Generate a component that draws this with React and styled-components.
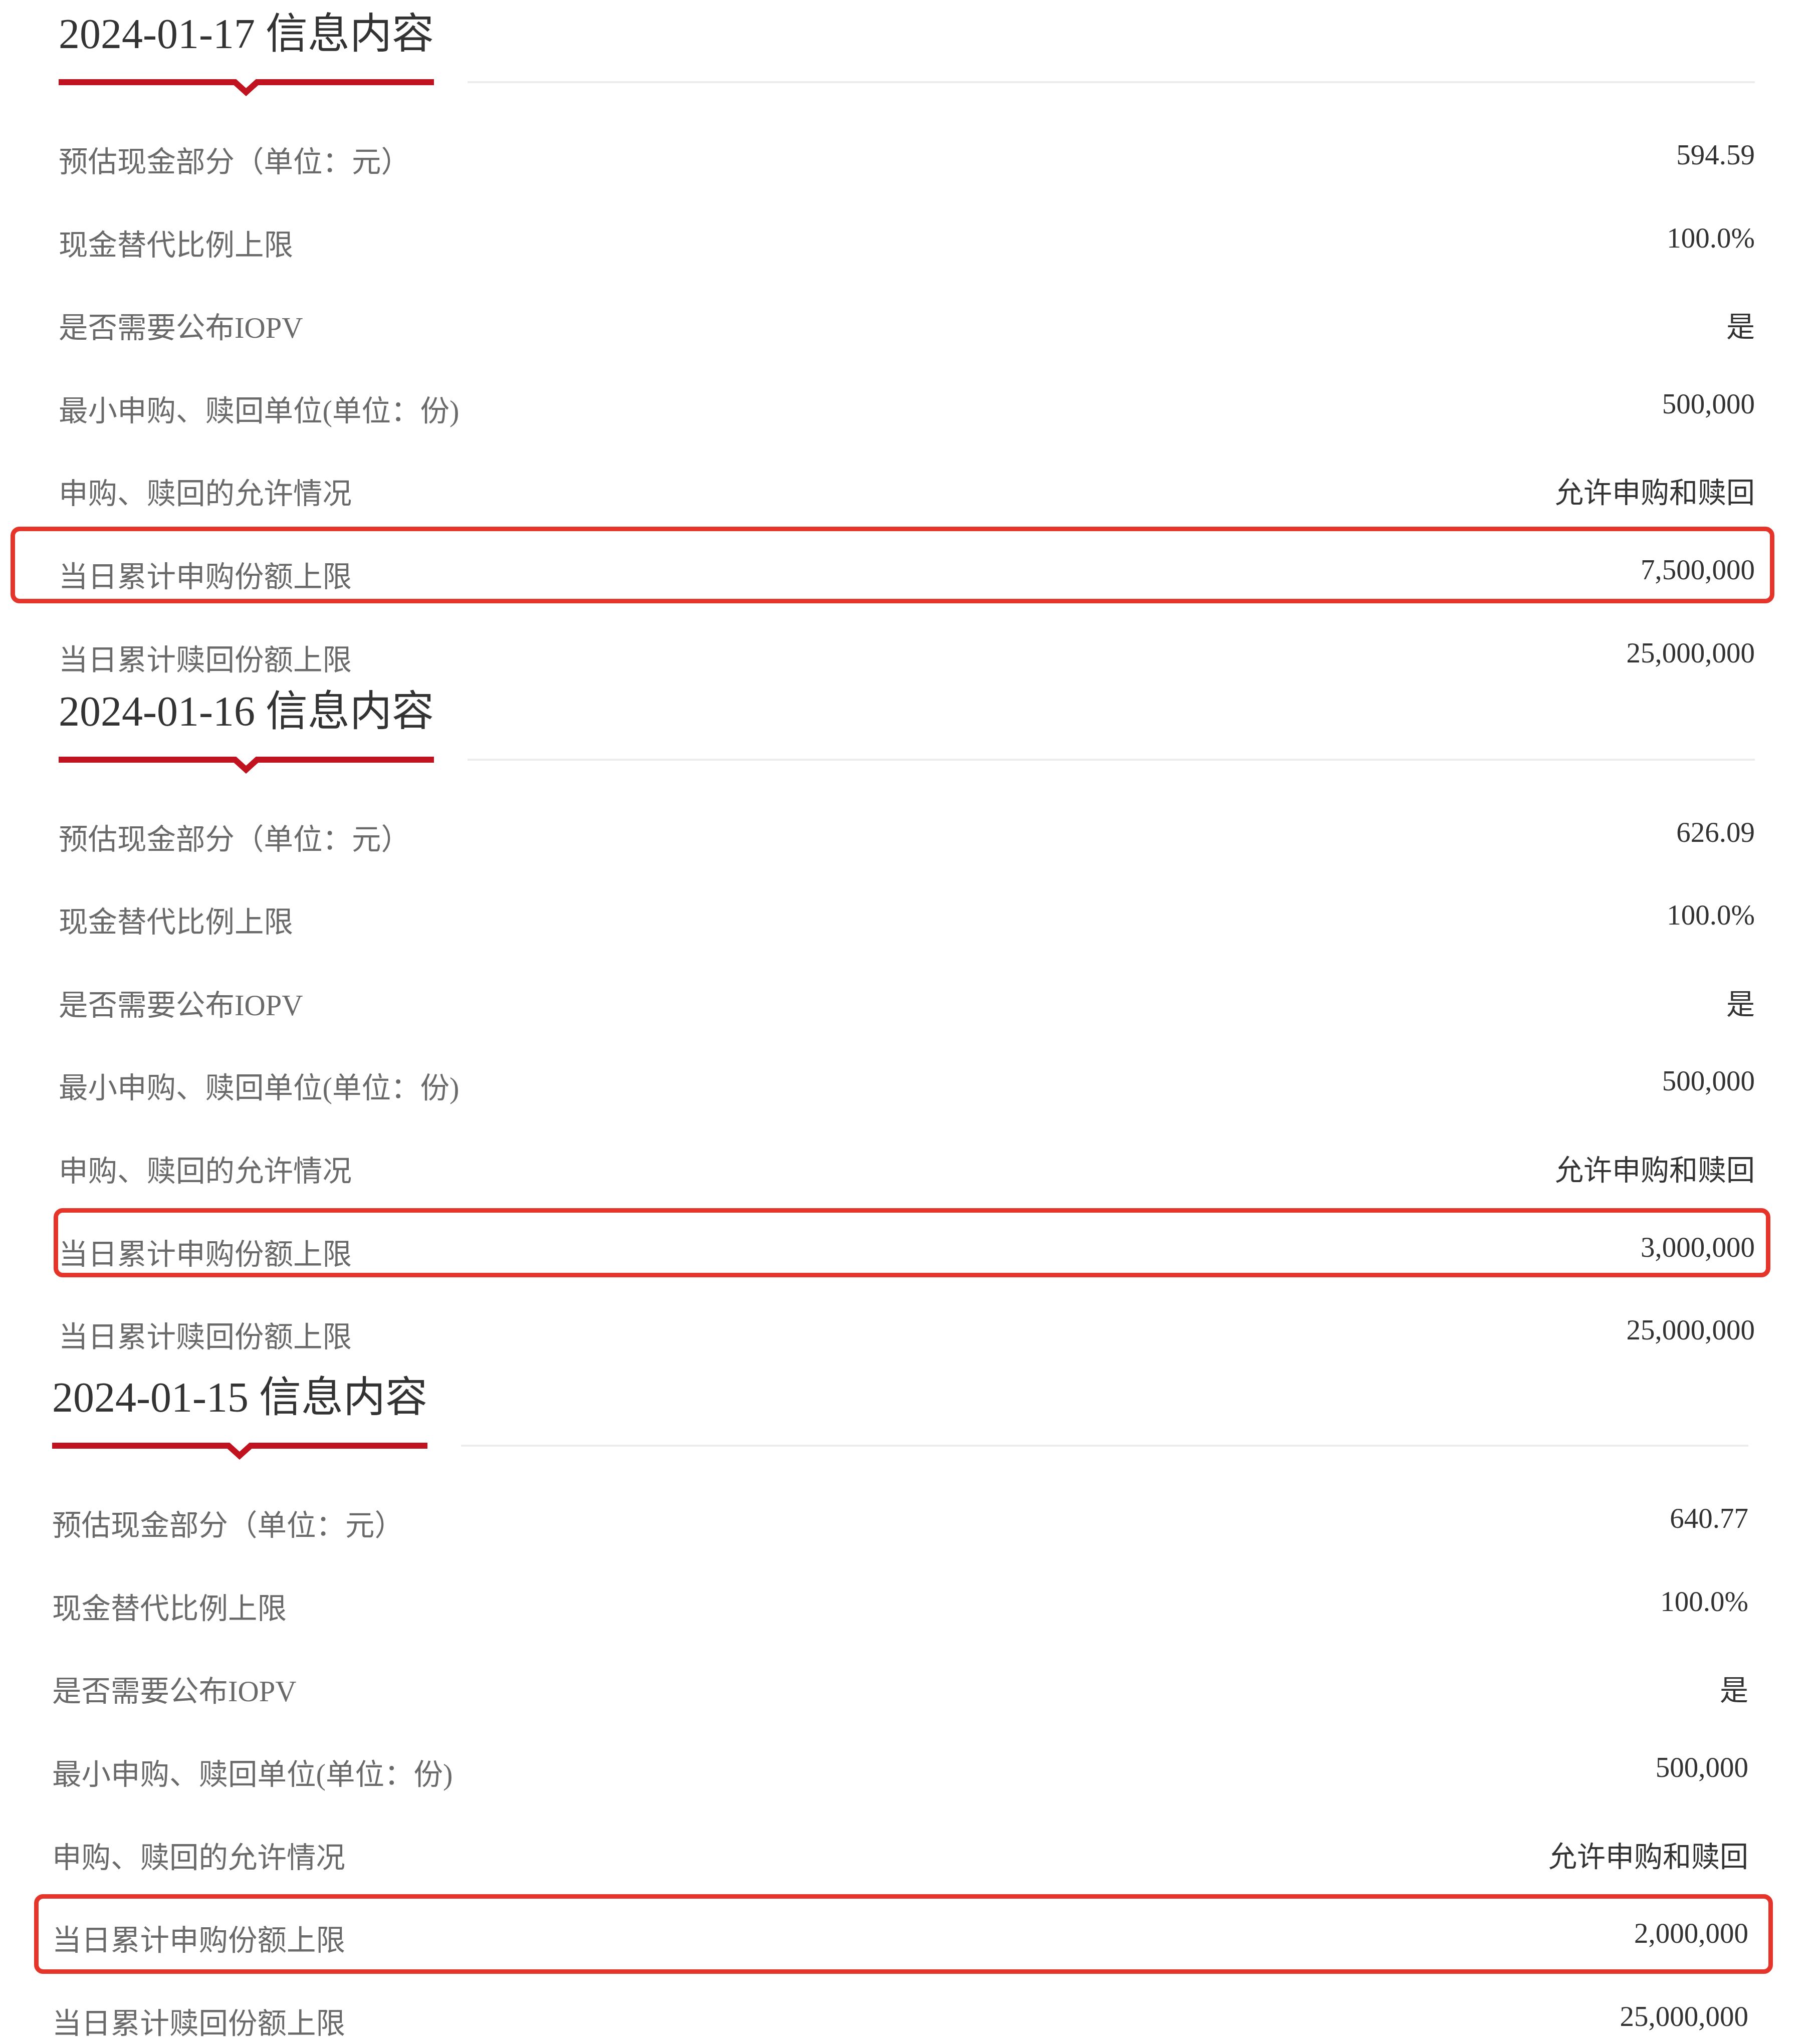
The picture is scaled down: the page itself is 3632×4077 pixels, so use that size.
import styled, { createGlobalStyle } from "styled-components";

const LABELS = [
  "预估现金部分（单位：元）",
  "现金替代比例上限",
  "是否需要公布IOPV",
  "最小申购、赎回单位(单位：份)",
  "申购、赎回的允许情况",
  "当日累计申购份额上限",
  "当日累计赎回份额上限",
];

const SECTIONS = [
  {
    date: "2024-01-17",
    top: 28,
    shift: 0,
    values: ["594.59", "100.0%", "是", "500,000", "允许申购和赎回", "7,500,000", "25,000,000"],
    box: { top: -39, bottom: 6, left: -96, right: -39 },
  },
  {
    date: "2024-01-16",
    top: 4,
    shift: 0,
    values: ["626.09", "100.0%", "是", "500,000", "允许申购和赎回", "3,000,000", "25,000,000"],
    box: { top: -31, bottom: 13, left: -10, right: -31 },
  },
  {
    date: "2024-01-15",
    top: 22,
    shift: 13,
    values: ["640.77", "100.0%", "是", "500,000", "允许申购和赎回", "2,000,000", "25,000,000"],
    box: { top: -31, bottom: -8, left: -36, right: -49 },
  },
];

const HIGHLIGHT_ROW = 5;

const isNumber = (v) => /^[\d.,%]+$/.test(v);

const App = () => {
  return (
    <>
      <GlobalStyle />
      <Page>
        {SECTIONS.map((s) => (
          <Section key={s.date} $top={s.top} $shift={s.shift}>
            <Header>
              <Title>{s.date} 信息内容</Title>
              <Bar>
                <BarSeg />
                <Notch width="44" height="36" viewBox="0 0 44 36">
                  <path d="M-2 6 L0 6 L22 26 L44 6 L46 6" />
                </Notch>
                <BarSeg />
              </Bar>
              <GrayLine />
            </Header>
            <Rows>
              {LABELS.map((label, i) => (
                <Row key={label}>
                  <Label>{label}</Label>
                  <Value $num={isNumber(s.values[i])}>{s.values[i]}</Value>
                  {i === HIGHLIGHT_ROW && (
                    <Highlight
                      $top={s.box.top}
                      $bottom={s.box.bottom}
                      $left={s.box.left}
                      $right={s.box.right}
                    />
                  )}
                </Row>
              ))}
            </Rows>
          </Section>
        ))}
      </Page>
    </>
  );
};

export default App;

const GlobalStyle = createGlobalStyle`
  html, body {
    margin: 0;
    padding: 0;
    background: #fff;
  }
  * {
    box-sizing: border-box;
  }
`;

const Page = styled.div`
  width: 3632px;
  background: #fff;
  font-family: "Liberation Serif", "Noto Sans CJK SC", serif;
  overflow: hidden;
`;

const Section = styled.section`
  padding: ${(p) => p.$top}px ${(p) => 130 + p.$shift}px 0 ${(p) => 117 - p.$shift}px;
`;

const Header = styled.div`
  display: grid;
  grid-template-columns: auto 1fr;
  column-gap: 67px;
`;

const Title = styled.h2`
  grid-column: 1;
  grid-row: 1;
  margin: 0;
  font-size: 84px;
  line-height: 80px;
  font-weight: 400;
  color: #333;
  white-space: nowrap;
`;

const Bar = styled.div`
  grid-column: 1;
  grid-row: 2;
  margin-top: 50px;
  display: flex;
  align-items: flex-start;
  height: 36px;
`;

const BarSeg = styled.div`
  flex: 1;
  height: 12px;
  background: #c1121f;
`;

const Notch = styled.svg`
  flex: none;
  overflow: visible;
  path {
    fill: none;
    stroke: #c1121f;
    stroke-width: 12;
    stroke-linejoin: miter;
  }
`;

const GrayLine = styled.div`
  grid-column: 2;
  grid-row: 2;
  align-self: start;
  margin-top: 54px;
  height: 4px;
  background: #ececec;
`;

const Rows = styled.div`
  margin-top: 68px;
  display: flex;
  flex-direction: column;
  gap: 45.6px;
`;

const Row = styled.div`
  position: relative;
  height: 120px;
  display: flex;
  justify-content: space-between;
  align-items: center;
`;

const Label = styled.span`
  font-size: 58.5px;
  line-height: 70px;
  color: #6a6a6a;
  white-space: nowrap;
  padding-top: 4px;
`;

const Value = styled.span`
  font-size: 57px;
  line-height: 70px;
  color: #333;
  white-space: nowrap;
  padding-bottom: ${(p) => (p.$num ? 26 : 0)}px;
`;

const Highlight = styled.div`
  position: absolute;
  top: ${(p) => p.$top}px;
  bottom: ${(p) => p.$bottom}px;
  left: ${(p) => p.$left}px;
  right: ${(p) => p.$right}px;
  border: 9px solid #e5342a;
  border-radius: 18px;
  pointer-events: none;
`;
